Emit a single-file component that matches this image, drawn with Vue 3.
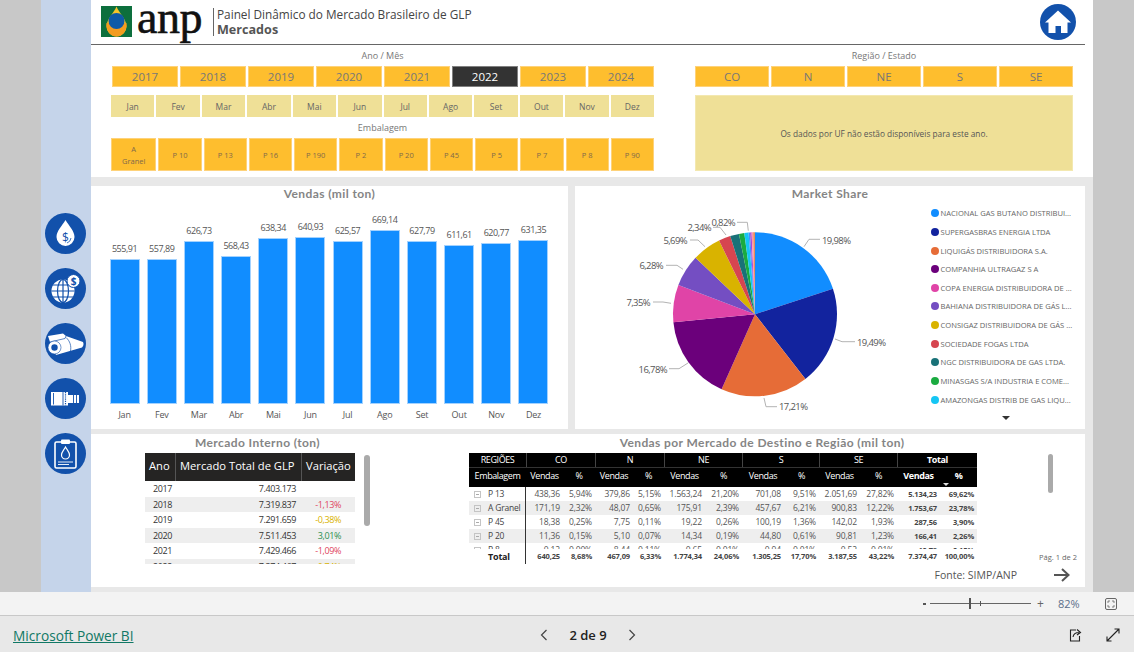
<template>
  <div class="page">
    <div class="report-area">
      <aside class="sidebar">
        <svg v-for="n in 5" :key="n" class="nav-icon" viewBox="0 0 41 41">
          <circle cx="20.5" cy="20.5" r="20.5" fill="#1251ab" />
          <g v-if="n === 1">
            <path d="M20.5 7 C24 13 29.5 18 29.5 24 A9 9 0 0 1 11.500 24 C11.500 18 17 13 20.500 7Z" fill="#fff" />
            <text x="20.500" y="28.500" text-anchor="middle" class="icon-text">$</text>
            <path d="M26 25 A6 6 0 0 1 22 30" fill="none" stroke="#1251ab" stroke-width="0.8" />
          </g>
          <g v-else-if="n === 2">
            <circle cx="18" cy="23" r="11.500" fill="#fff" />
            <path d="M6.500 23H29.500M8 17H28M8 29H28M18 11.500V34.500" stroke="#1251ab" stroke-width="1.200" fill="none" />
            <ellipse cx="18" cy="23" rx="5.500" ry="11.500" fill="none" stroke="#1251ab" stroke-width="1.200" />
            <circle cx="28.500" cy="13" r="6.500" fill="#fff" stroke="#1251ab" />
            <text x="28.500" y="16.500" text-anchor="middle" class="icon-text small">$</text>
          </g>
          <g v-else-if="n === 3">
            <path d="M3 13 L18 10.500 L21 13 L38 19 C39 21 38.500 23 37 24.500 L11 32 L5 19 Z" fill="#fff" />
            <path d="M5 19 L20 15.500 L21 13 M21 14.500 C25 18 26.500 23 25.500 28" stroke="#1251ab" stroke-width="0.700" fill="none" />
            <circle cx="9.500" cy="24.500" r="6.500" fill="#fff" stroke="#1251ab" stroke-width="0.600" />
            <circle cx="9.500" cy="24.500" r="3.200" fill="#1251ab" />
          </g>
          <g v-else-if="n === 4">
            <path d="M6 14 H23 V17 H34 V25 H23 V27.500 H6 Z" fill="#fff" />
            <path d="M8.500 15V26.500M18 14V27.500M28.500 17V25M31.500 17V25" stroke="#1251ab" stroke-width="0.900" />
            <path d="M20.500 14V27.500" stroke="#1251ab" stroke-width="1.200" stroke-dasharray="1.200 1" />
          </g>
          <g v-else>
            <rect x="10" y="9" width="21" height="26" rx="1.500" fill="none" stroke="#fff" stroke-width="1.600" />
            <rect x="16" y="6.500" width="9" height="4.500" rx="1" fill="#fff" />
            <path d="M20.500 14 C22.500 17.500 24.500 19 24.500 22 A4 4 0 0 1 16.500 22 C16.500 19 18.500 17.500 20.500 14Z" fill="none" stroke="#fff" stroke-width="1.200" />
            <path d="M13 29H28M13 31.500H24" stroke="#fff" stroke-width="0.900" />
          </g>
        </svg>
      </aside>

      <main class="report">
        <section class="top-panel">
          <header class="report-header">
            <svg class="logo-mark" viewBox="0 0 31 31">
              <rect width="31" height="31" fill="#0d6f3d" />
              <path d="M15.500 0.500 C18 7 25.500 13 25.500 20.500 A10 10 0 0 1 5.500 20.500 C5.500 13 13 7 15.500 0.500Z" fill="#f7c52a" />
              <path d="M5.500 17 H25.500 C26.500 24 22 30.500 15.500 30.500 C9 30.500 4.500 24 5.500 17Z" fill="#f39c1f" />
              <circle cx="15.500" cy="15" r="8" fill="#0e5aa7" />
            </svg>
            <span class="logo-text">anp</span>
            <div class="header-titles">
              <div class="header-main">Painel Dinâmico do Mercado Brasileiro de GLP</div>
              <div class="header-sub">Mercados</div>
            </div>
            <svg class="home-icon" viewBox="0 0 36 36">
              <circle cx="18" cy="18" r="18" fill="#1251ab" />
              <path d="M18 6.500 L31 18.500 H27.500 V29 H21 V22 H15.500 V29 H8.500 V18.500 H5 Z" fill="#fff" />
            </svg>
          </header>

          <div class="filters">
            <div class="filter-left">
              <div class="filter-label">Ano / Mês</div>
              <div class="btn-row year-row">
                <div v-for="y in years" :key="y" class="slicer year" :class="{ selected: y === '2022' }">{{ y }}</div>
              </div>
              <div class="btn-row month-row">
                <div v-for="m in months" :key="m" class="slicer month">{{ m }}</div>
              </div>
              <div class="filter-label emb-label">Embalagem</div>
              <div class="btn-row pack-row">
                <div v-for="p in packages" :key="p" class="slicer pack" :class="{ wrap: p === 'A Granel' }">{{ p }}</div>
              </div>
            </div>
            <div class="filter-right">
              <div class="filter-label">Região / Estado</div>
              <div class="btn-row region-row">
                <div v-for="r in regions" :key="r" class="slicer year">{{ r }}</div>
              </div>
              <div class="uf-note">Os dados por UF não estão disponíveis para este ano.</div>
            </div>
          </div>
        </section>

        <section class="chart-row">
          <div class="card bar-card">
            <h3 class="din-title">Vendas (mil ton)</h3>
            <div class="bars">
              <div v-for="b in sales" :key="b.month" class="bar-col">
                <div class="bar-value">{{ b.label }}</div>
                <div class="bar" :style="{ height: b.value * 0.26 + 'px' }"></div>
                <div class="bar-month">{{ b.month }}</div>
              </div>
            </div>
          </div>

          <div class="card pie-card">
            <h3 class="din-title">Market Share</h3>
            <div class="pie-body">
              <svg class="pie" viewBox="575 202 350 227">
                <path v-for="s in slices" :key="s.color + s.d" :d="s.d" :fill="s.color" />
                <g v-for="l in pieLabels" :key="l.text">
                  <polyline :points="l.line" fill="none" stroke="#b3b3b3" stroke-width="1" />
                  <text :x="l.x" :y="l.y" :text-anchor="l.anchor" class="pie-label">{{ l.text }}</text>
                </g>
              </svg>
              <div class="legend">
                <div v-for="c in companies" :key="c.name" class="legend-item">
                  <span class="legend-dot" :style="{ background: c.color }"></span>
                  <span>{{ c.name }}</span>
                </div>
                <div class="legend-more"></div>
              </div>
            </div>
          </div>
        </section>

        <section class="card bottom-card">
          <div class="internal-block">
            <h3 class="din-title">Mercado Interno (ton)</h3>
            <div class="internal-body">
              <div class="internal-table">
                <div class="it-row it-head">
                  <div>Ano</div>
                  <div>Mercado Total de GLP</div>
                  <div>Variação</div>
                </div>
                <div class="it-rows">
                  <div v-for="r in internal" :key="r.year" class="it-row">
                    <div>{{ r.year }}</div>
                    <div class="num">{{ r.total }}</div>
                    <div class="var" :style="{ color: r.color }">{{ r.change }}</div>
                  </div>
                </div>
              </div>
              <div class="scroll-thumb internal-thumb"></div>
            </div>
          </div>

          <div class="matrix-block">
            <h3 class="din-title matrix-title">Vendas por Mercado de Destino e Região (mil ton)</h3>
            <div class="matrix-body">
              <div class="matrix">
                <div class="mx-head">
                  <div class="mx-row">
                    <div class="mx-h">REGIÕES</div>
                    <div v-for="h in matrixRegions" :key="h" class="mx-h span2" :class="{ strong: h === 'Total' }">{{ h }}</div>
                  </div>
                  <div class="mx-row mx-sub">
                    <div class="mx-h">Embalagem</div>
                    <template v-for="h in matrixRegions" :key="h">
                      <div class="mx-h" :class="{ strong: h === 'Total' }">Vendas</div>
                      <div class="mx-h pct" :class="{ strong: h === 'Total', sorted: h === 'Total' }">%</div>
                    </template>
                  </div>
                </div>
                <div class="mx-rows">
                  <div v-for="r in matrixRows" :key="r.name" class="mx-row mx-data">
                    <div class="mx-name"><span class="expand"></span>{{ r.name }}</div>
                    <div v-for="(v, i) in r.values" :key="i" class="mx-cell" :class="{ strong: i > 9 }">{{ v }}</div>
                  </div>
                </div>
                <div class="mx-row mx-total">
                  <div class="mx-name total-name">Total</div>
                  <div v-for="(v, i) in matrixTotal" :key="i" class="mx-cell strong">{{ v }}</div>
                </div>
              </div>
              <div class="matrix-side">
                <div class="scroll-thumb matrix-thumb"></div>
                <div class="page-note">Pág. 1 de 2</div>
              </div>
            </div>
            <div class="source-row">
              <span>Fonte: SIMP/ANP</span>
              <svg class="next-arrow" viewBox="0 0 16 14">
                <path d="M0 7H14M8 1L14.500 7L8 13" fill="none" stroke="#555" stroke-width="2" />
              </svg>
            </div>
          </div>
        </section>
      </main>
    </div>

    <div class="zoom-bar">
      <span class="zoom-minus"></span>
      <div class="zoom-track"><span class="zoom-thumb"></span><span class="zoom-tick"></span></div>
      <span class="zoom-plus">+</span>
      <span class="zoom-value">82%</span>
      <svg class="fit-icon" viewBox="0 0 12 12">
        <rect x="0.500" y="0.500" width="11" height="11" rx="1.500" fill="none" stroke="#666" />
        <path d="M3 5V3H5M7 3H9V5M9 7V9H7M5 9H3V7" fill="none" stroke="#666" stroke-width="0.800" />
      </svg>
    </div>

    <footer class="footer">
      <a class="pbi-link">Microsoft Power BI</a>
      <div class="pager">
        <svg class="chev" viewBox="0 0 8 12"><path d="M6.500 1L1.500 6L6.500 11" fill="none" stroke="#444" stroke-width="1.200" /></svg>
        <span class="pager-text">2 de 9</span>
        <svg class="chev" viewBox="0 0 8 12"><path d="M1.500 1L6.500 6L1.500 11" fill="none" stroke="#444" stroke-width="1.200" /></svg>
      </div>
      <div class="footer-icons">
        <svg class="foot-icon" viewBox="0 0 14 14">
          <path d="M8 2H2.500V13H11.500V8" fill="none" stroke="#222" stroke-width="1.100" />
          <path d="M5 9C5.500 6 8 4.500 11 4.500M9 1.500L12.500 4.500L9 7" fill="none" stroke="#222" stroke-width="1.100" />
        </svg>
        <svg class="foot-icon" viewBox="0 0 14 14">
          <path d="M8.500 1H13V5.500M13 1L1 13M1 8.500V13H5.500" fill="none" stroke="#222" stroke-width="1.100" />
        </svg>
      </div>
    </footer>
  </div>
</template>

<script setup>
const years = ['2017', '2018', '2019', '2020', '2021', '2022', '2023', '2024']
const months = ['Jan', 'Fev', 'Mar', 'Abr', 'Mai', 'Jun', 'Jul', 'Ago', 'Set', 'Out', 'Nov', 'Dez']
const packages = ['A Granel', 'P 10', 'P 13', 'P 16', 'P 190', 'P 2', 'P 20', 'P 45', 'P 5', 'P 7', 'P 8', 'P 90']
const regions = ['CO', 'N', 'NE', 'S', 'SE']

const salesValues = [555.91, 557.89, 626.73, 568.43, 638.34, 640.93, 625.57, 669.14, 627.79, 611.61, 620.77, 631.35]
const sales = salesValues.map((value, i) => ({
  value,
  month: months[i],
  label: value.toFixed(2).replace('.', ',')
}))

const companies = [
  { name: 'NACIONAL GAS BUTANO DISTRIBUI...', color: '#118dff' },
  { name: 'SUPERGASBRAS ENERGIA LTDA', color: '#12239e' },
  { name: 'LIQUIGÁS DISTRIBUIDORA S.A.', color: '#e66c37' },
  { name: 'COMPANHIA ULTRAGAZ S A', color: '#6b007b' },
  { name: 'COPA ENERGIA DISTRIBUIDORA DE ...', color: '#e044a7' },
  { name: 'BAHIANA DISTRIBUIDORA DE GÁS L...', color: '#744ec2' },
  { name: 'CONSIGAZ DISTRIBUIDORA DE GÁS ...', color: '#d9b300' },
  { name: 'SOCIEDADE FOGAS LTDA', color: '#d64550' },
  { name: 'NGC DISTRIBUIDORA DE GAS LTDA.', color: '#197278' },
  { name: 'MINASGAS S/A INDUSTRIA E COME...', color: '#1aab40' },
  { name: 'AMAZONGAS DISTRIB DE GAS LIQU...', color: '#15c6f4' }
]

const shares = [19.98, 19.49, 17.21, 16.78, 7.35, 6.28, 5.69, 2.34, 1.75, 1.05, 0.82, 0.3, 0.3, 0.3, 0.36]
const sliceColors = companies.map((c) => c.color).concat(['#4092ff', '#a64ad6', '#ff8fb1', '#e88c5a'])
const cx = 755
const cy = 314.3
const radius = 82

let angle = 0
const slices = shares.map((share, i) => {
  const start = angle
  angle += (share / 100) * Math.PI * 2
  const x1 = cx + radius * Math.sin(start)
  const y1 = cy - radius * Math.cos(start)
  const x2 = cx + radius * Math.sin(angle)
  const y2 = cy - radius * Math.cos(angle)
  return {
    color: sliceColors[i],
    d: `M${cx} ${cy}L${x1.toFixed(2)} ${y1.toFixed(2)}A${radius} ${radius} 0 0 1 ${x2.toFixed(2)} ${y2.toFixed(2)}Z`
  }
})

const pieLabels = [
  { text: '19,98%', x: 822, y: 244, anchor: 'start', line: '804,246.700 809,239.300 820,239.300' },
  { text: '19,49%', x: 857, y: 346, anchor: 'start', line: '835,339 842,341.700 855,341.700' },
  { text: '17,21%', x: 779, y: 410, anchor: 'start', line: '764,398 766,406.700 777,406.700' },
  { text: '16,78%', x: 667, y: 373, anchor: 'end', line: '688,363 679,368.700 669,368.700' },
  { text: '7,35%', x: 650, y: 306, anchor: 'end', line: '671,303.300 663,302 653,302' },
  { text: '6,28%', x: 663, y: 269, anchor: 'end', line: '683,269.300 677,265.300 666,265.300' },
  { text: '5,69%', x: 687, y: 244, anchor: 'end', line: '705,246.700 698,240 690,240' },
  { text: '2,34%', x: 711, y: 231, anchor: 'end', line: '726,235 720,227.300 713,227.300' },
  { text: '0,82%', x: 735, y: 226, anchor: 'end', line: '748.300,230.700 747.300,222.300 737,222.300' }
]

const internal = [
  { year: '2017', total: '7.403.173', change: '', color: '' },
  { year: '2018', total: '7.319.837', change: '-1,13%', color: '#e0455e' },
  { year: '2019', total: '7.291.659', change: '-0,38%', color: '#d9b300' },
  { year: '2020', total: '7.511.453', change: '3,01%', color: '#2a8f4e' },
  { year: '2021', total: '7.429.466', change: '-1,09%', color: '#e0455e' },
  { year: '2022', total: '7.374.467', change: '-0,74%', color: '#d9b300' }
]

const matrixRegions = ['CO', 'N', 'NE', 'S', 'SE', 'Total']
const matrixRows = [
  { name: 'P 13', values: ['438,36', '5,94%', '379,86', '5,15%', '1.563,24', '21,20%', '701,08', '9,51%', '2.051,69', '27,82%', '5.134,23', '69,62%'] },
  { name: 'A Granel', values: ['171,19', '2,32%', '48,07', '0,65%', '175,91', '2,39%', '457,67', '6,21%', '900,83', '12,22%', '1.753,67', '23,78%'] },
  { name: 'P 45', values: ['18,38', '0,25%', '7,75', '0,11%', '19,22', '0,26%', '100,19', '1,36%', '142,02', '1,93%', '287,56', '3,90%'] },
  { name: 'P 20', values: ['11,36', '0,15%', '5,10', '0,07%', '14,34', '0,19%', '44,80', '0,61%', '90,81', '1,23%', '166,41', '2,26%'] },
  { name: 'P 8', values: ['0,12', '0,00%', '8,44', '0,11%', '0,65', '0,01%', '0,94', '0,01%', '0,52', '0,01%', '10,78', '0,15%'] }
]
const matrixTotal = ['640,25', '8,68%', '467,09', '6,33%', '1.774,34', '24,06%', '1.305,25', '17,70%', '3.187,55', '43,22%', '7.374,47', '100,00%']
</script>

<style scoped>
.page {
  width: 1134px;
  height: 652px;
  display: flex;
  flex-direction: column;
  overflow: hidden;
  font-family: "Open Sans", "Noto Sans", sans-serif;
  color: #666;
}

.report-area {
  height: 592px;
  display: flex;
  padding: 0 41px;
  background: #c8c8c8;
}

.sidebar {
  width: 50px;
  padding-top: 213px;
  padding-left: 4px;
  display: flex;
  flex-direction: column;
  gap: 14px;
  background: #c5d4ea;
  box-sizing: border-box;
}

.nav-icon {
  width: 41px;
  height: 41px;
  flex: none;
}

.icon-text {
  font-family: "Open Sans", sans-serif;
  font-size: 12px;
  fill: #1251ab;
}

.icon-text.small {
  font-size: 10px;
  font-weight: 700;
}

.report {
  flex: 1;
  background: #e8e8e8;
}

.top-panel {
  height: 177px;
  background: #fff;
}

.report-header {
  height: 45px;
  margin-right: 8px;
  padding-left: 10px;
  padding-right: 9px;
  display: flex;
  align-items: flex-start;
  border-bottom: 1.500px solid #666;
  box-sizing: border-box;
}

.logo-mark {
  width: 31px;
  height: 31px;
  margin-top: 6px;
}

.logo-text {
  width: 81px;
  padding-left: 5px;
  box-sizing: border-box;
  font-family: "Liberation Serif", serif;
  font-size: 46px;
  line-height: 36px;
  letter-spacing: -0.500px;
  color: #111;
  -webkit-text-stroke: 0.600px #111;
}

.header-titles {
  margin-top: 8px;
  padding-left: 3px;
  border-left: 1px solid #666;
  height: 28px;
}

.header-main {
  font-size: 11.800px;
  line-height: 13px;
  color: #444;
}

.header-sub {
  font-size: 12.600px;
  line-height: 17px;
  font-weight: 700;
  color: #555;
}

.home-icon {
  width: 36px;
  height: 36px;
  margin-left: auto;
  margin-top: 4px;
}

.filters {
  display: flex;
  gap: 41px;
  padding-left: 20px;
}

.filter-left {
  width: 543px;
}

.filter-right {
  width: 378px;
}

.filter-label {
  height: 21px;
  line-height: 22px;
  text-align: center;
  font-size: 9px;
  color: #777;
}

.btn-row {
  display: grid;
  gap: 2px;
}

.year-row {
  grid-template-columns: repeat(8, 1fr);
  height: 21px;
  margin-left: 1px;
}

.region-row {
  grid-template-columns: repeat(5, 1fr);
  height: 21px;
}

.month-row {
  grid-template-columns: repeat(12, 1fr);
  height: 22px;
  margin-top: 8px;
}

.pack-row {
  grid-template-columns: repeat(12, 1fr);
  height: 33px;
}

.slicer {
  display: flex;
  align-items: center;
  justify-content: center;
  text-align: center;
  box-sizing: border-box;
  color: #777;
}

.year {
  background: #febe2e;
  font-size: 11.500px;
  border: 1px solid #fed27a;
}

.selected {
  background: #333;
  color: #fff;
  border-color: #808080;
}

.month {
  background: #efe097;
  font-size: 8.500px;
  color: #666;
}

.pack {
  background: #febe2e;
  font-size: 7.500px;
  line-height: 12px;
  border: 1px solid #fed27a;
  color: #80694a;
  padding: 0 10px;
}

.uf-note {
  height: 76px;
  margin-top: 8px;
  display: flex;
  align-items: center;
  justify-content: center;
  background: #efe097;
  border: 1px solid #f3e8b0;
  box-sizing: border-box;
  font-size: 8.300px;
  color: #555;
}

.chart-row {
  display: flex;
  gap: 7px;
  margin-top: 9px;
  margin-right: 8px;
}

.card {
  background: #fff;
}

.din-title {
  margin: 0;
  height: 16px;
  line-height: 16px;
  text-align: center;
  font-family: "Lato", sans-serif;
  font-size: 12px;
  font-weight: 700;
  letter-spacing: 0.400px;
  color: #858585;
}

.bar-card {
  width: 477px;
  height: 243px;
  display: flex;
  flex-direction: column;
}

.bars {
  margin-top: auto;
  padding: 0 16px 5px 15px;
  display: flex;
  align-items: flex-end;
}

.bar-col {
  flex: 1;
  display: flex;
  flex-direction: column;
  align-items: center;
}

.bar-value {
  font-size: 9px;
  line-height: 12px;
  letter-spacing: -0.450px;
  margin-bottom: 4px;
  color: #555;
}

.bar {
  width: 30px;
  background: #118dff;
  border: 1px solid #a3d2ff;
  box-sizing: border-box;
}

.bar-month {
  height: 20px;
  line-height: 21px;
  font-size: 9px;
  letter-spacing: -0.200px;
  color: #555;
}

.pie-card {
  width: 510px;
  height: 243px;
}

.pie-body {
  display: flex;
}

.pie {
  width: 350px;
  height: 227px;
  flex: none;
}

.pie-label {
  font-family: "Open Sans", sans-serif;
  font-size: 9.500px;
  letter-spacing: -0.600px;
  fill: #555;
}

.legend {
  padding-top: 2px;
  padding-left: 6px;
}

.legend-item {
  height: 18.640px;
  display: flex;
  align-items: center;
  gap: 1.500px;
  font-size: 7.600px;
  white-space: nowrap;
  color: #666;
}

.legend-dot {
  width: 8px;
  height: 8px;
  border-radius: 50%;
  flex: none;
}

.legend-more {
  width: 0;
  height: 0;
  margin: 7px 0 0 71px;
  border-left: 4px solid transparent;
  border-right: 4px solid transparent;
  border-top: 4px solid #333;
}

.bottom-card {
  height: 153px;
  margin-top: 5px;
  margin-right: 8px;
  padding-left: 54px;
  display: flex;
  gap: 99px;
}

.internal-block {
  width: 225px;
  padding-top: 1px;
}

.internal-body {
  display: flex;
  margin-top: 2px;
}

.internal-table {
  width: 210px;
}

.it-row {
  display: grid;
  grid-template-columns: 30px 126px 54px;
  height: 15.500px;
  line-height: 15.500px;
  font-size: 9px;
  letter-spacing: -0.400px;
  color: #333;
}

.it-row > div:first-child {
  padding-left: 8px;
}

.it-head {
  height: 28px;
  line-height: 25px;
  background: #252423;
  color: #fff;
  font-size: 11.200px;
  letter-spacing: 0;
}

.it-head > div {
  padding: 0 4px;
  border-left: 1px solid #555;
  white-space: nowrap;
  text-align: left;
}

.it-head > div:first-child {
  padding-left: 4px;
  border-left: none;
}

.it-rows {
  height: 83px;
  overflow: hidden;
}

.it-rows .it-row:nth-child(even) {
  background: #eee;
}

.num {
  text-align: right;
  padding-right: 5px;
}

.var {
  text-align: right;
  padding-right: 14px;
}

.scroll-thumb {
  width: 5.500px;
  background: #aaa;
  border-radius: 3px;
  flex: none;
}

.internal-thumb {
  height: 71px;
  margin: 2px 0 0 9px;
}

.matrix-block {
  width: 608px;
}

.matrix-title {
  width: 586px;
  height: 19px;
  line-height: 18px;
}

.matrix-body {
  display: flex;
}

.matrix {
  width: 508px;
  flex: none;
}

.mx-head {
  background: #000;
  color: #fff;
}

.mx-row {
  display: grid;
  grid-template-columns: 57px 37px 32px 38px 31px 41px 37px 42px 35px 41px 37px 43px 37px;
}

.mx-h {
  height: 14px;
  line-height: 14px;
  text-align: center;
  font-size: 9px;
  letter-spacing: -0.400px;
  color: #fff;
  position: relative;
}

.span2 {
  grid-column: span 2;
  border-left: 1px solid #444;
}

.mx-sub {
  border-top: 1px solid #333;
}

.mx-sub .mx-h {
  height: 19px;
  line-height: 16px;
}

.strong {
  font-weight: 700;
}

.sorted::after {
  content: "";
  position: absolute;
  left: 3px;
  bottom: 1px;
  border-left: 3px solid transparent;
  border-right: 3px solid transparent;
  border-top: 3px solid #ddd;
}

.mx-rows {
  height: 62px;
  overflow: hidden;
}

.mx-data {
  height: 14px;
  line-height: 14px;
}

.mx-data:nth-child(even) {
  background: #eee;
}

.mx-name {
  display: flex;
  align-items: center;
  gap: 7px;
  padding-left: 5px;
  font-size: 8.500px;
  letter-spacing: -0.200px;
  color: #444;
  border-right: 1px solid #333;
  white-space: nowrap;
}

.expand {
  width: 5px;
  height: 5px;
  border: 1px solid #c4c4c4;
  flex: none;
  position: relative;
}

.expand::after {
  content: "";
  position: absolute;
  left: 1px;
  right: 1px;
  top: 2px;
  height: 1px;
  background: #aaa;
}

.mx-cell {
  text-align: right;
  padding-right: 3px;
  font-size: 8.500px;
  letter-spacing: -0.150px;
  color: #555;
  white-space: nowrap;
}

.mx-cell.strong {
  font-size: 7.500px;
  color: #444;
}

.mx-total {
  height: 15px;
  line-height: 15px;
}

.total-name {
  padding-left: 19px;
  font-size: 9px;
  font-weight: 700;
  color: #222;
}

.matrix-side {
  flex: 1;
  display: flex;
  flex-direction: column;
  align-items: flex-end;
}

.matrix-thumb {
  height: 39px;
  margin: 1px 24px 0 0;
}

.page-note {
  margin-top: auto;
  margin-bottom: 2px;
  font-size: 7.500px;
  color: #666;
}

.source-row {
  display: flex;
  justify-content: flex-end;
  align-items: center;
  gap: 37px;
  height: 22px;
  padding-right: 7px;
  font-size: 10.500px;
  color: #555;
}

.next-arrow {
  width: 16px;
  height: 14px;
}

.zoom-bar {
  height: 23px;
  display: flex;
  align-items: center;
  background: #f3f3f3;
  padding-left: 923px;
  box-sizing: border-box;
  color: #666;
}

.zoom-minus {
  width: 3px;
  height: 2px;
  background: #555;
}

.zoom-track {
  width: 101px;
  height: 1px;
  margin-left: 4px;
  background: #666;
  position: relative;
}

.zoom-thumb {
  position: absolute;
  left: 39px;
  top: -5px;
  width: 2px;
  height: 11px;
  background: #555;
}

.zoom-tick {
  position: absolute;
  left: 50px;
  top: -2px;
  width: 1px;
  height: 5px;
  background: #555;
}

.zoom-plus {
  margin-left: 6px;
  font-size: 12px;
}

.zoom-value {
  margin-left: 14px;
  font-size: 11px;
  color: #5b6f8a;
}

.fit-icon {
  width: 12px;
  height: 12px;
  margin-left: 25px;
}

.footer {
  height: 37px;
  padding-top: 2px;
  display: grid;
  grid-template-columns: 540px 96px 1fr;
  align-items: center;
  background: #e8e8e8;
  border-top: 1px solid #c8c8c8;
  box-sizing: border-box;
}

.pbi-link {
  margin-left: 13px;
  font-size: 13.700px;
  color: #117865;
  text-decoration: underline;
  white-space: nowrap;
}

.pager {
  display: flex;
  align-items: center;
  justify-content: space-between;
}

.chev {
  width: 8px;
  height: 12px;
}

.pager-text {
  font-size: 13px;
  font-weight: 600;
  color: #222;
}

.footer-icons {
  display: flex;
  justify-content: flex-end;
  gap: 24px;
  padding-right: 14px;
}

.foot-icon {
  width: 14px;
  height: 14px;
}
</style>

<style>
html,
body {
  margin: 0;
  padding: 0;
}
</style>
